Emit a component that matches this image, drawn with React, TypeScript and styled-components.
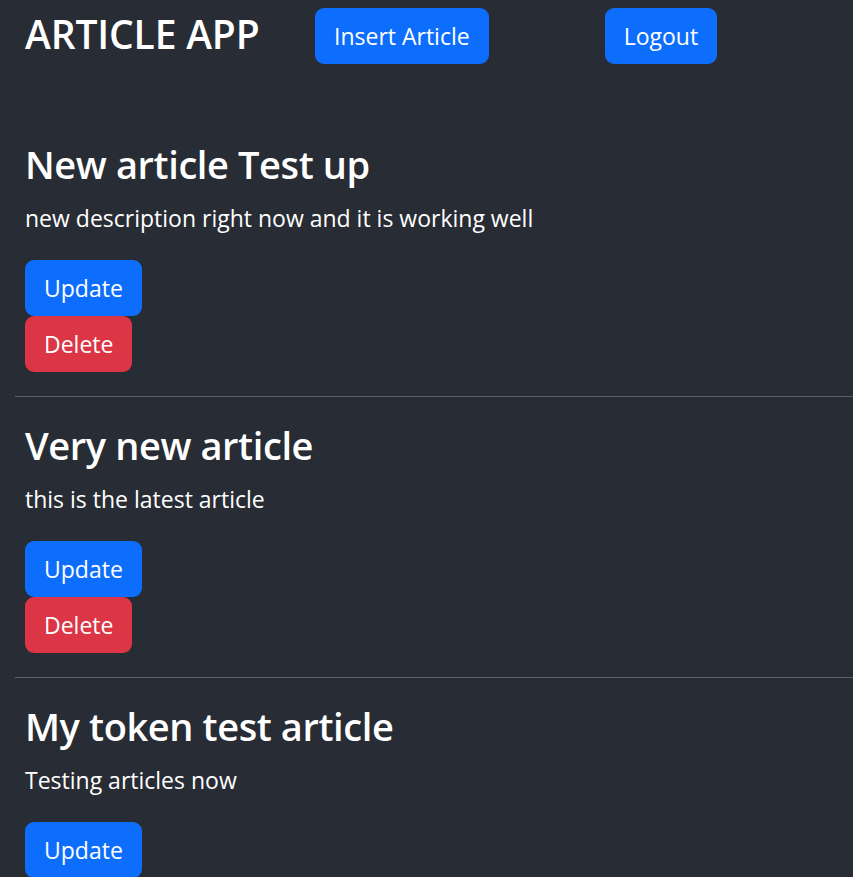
import React from "react";
import styled, { createGlobalStyle } from "styled-components";

const Global = createGlobalStyle`
  html, body { margin: 0; padding: 0; background: #282c34; }
  body {
    font-family: "Open Sans", "Noto Sans", sans-serif;
    color: #ffffff;
    overflow: hidden;
  }
  * { box-sizing: border-box; }
`;

const Page = styled.div`
  min-height: 877px;
  background: #282c34;
  padding-left: 15px;
`;

const Header = styled.header`
  display: flex;
  align-items: flex-start;
  padding: 8px 0 0 10px;
  height: 140px;
`;

const Brand = styled.h1`
  margin: 0;
  width: 290px;
  font-size: 39px;
  font-weight: 600;
  line-height: 52px;
  letter-spacing: -0.15px;
`;

const Button = styled.button<{ $variant?: "primary" | "danger" }>`
  display: block;
  height: 56px;
  padding: 0 19px;
  border: none;
  border-radius: 9px;
  font-family: inherit;
  font-size: 23px;
  color: #fff;
  background: ${(p) => (p.$variant === "danger" ? "#dc3545" : "#0d6efd")};
  cursor: pointer;
`;

const HeaderActions = styled.div`
  display: flex;
  gap: 116px;
`;

const Article = styled.article`
  padding-left: 10px;
`;

const Title = styled.h2`
  margin: 0 0 12px;
  font-size: 38px;
  font-weight: 600;
  line-height: 48px;
  letter-spacing: -0.4px;
`;

const Desc = styled.p`
  margin: 0 0 24px;
  font-size: 23px;
  line-height: 36px;
`;

const Divider = styled.hr`
  margin: 24px 0;
  border: 0;
  border-top: 1px solid #5d6067;
`;

const articles = [
  { title: "New article Test up", desc: "new description right now and it is working well" },
  { title: "Very new article", desc: "this is the latest article" },
  { title: "My token test article", desc: "Testing articles now" },
];

export default function App() {
  return (
    <Page>
      <Global />
      <Header>
        <Brand>ARTICLE APP</Brand>
        <HeaderActions>
          <Button>Insert Article</Button>
          <Button>Logout</Button>
        </HeaderActions>
      </Header>
      {articles.map((a, i) => (
        <React.Fragment key={i}>
          <Article>
            <Title>{a.title}</Title>
            <Desc>{a.desc}</Desc>
            <Button>Update</Button>
            <Button $variant="danger">Delete</Button>
          </Article>
          <Divider />
        </React.Fragment>
      ))}
    </Page>
  );
}
